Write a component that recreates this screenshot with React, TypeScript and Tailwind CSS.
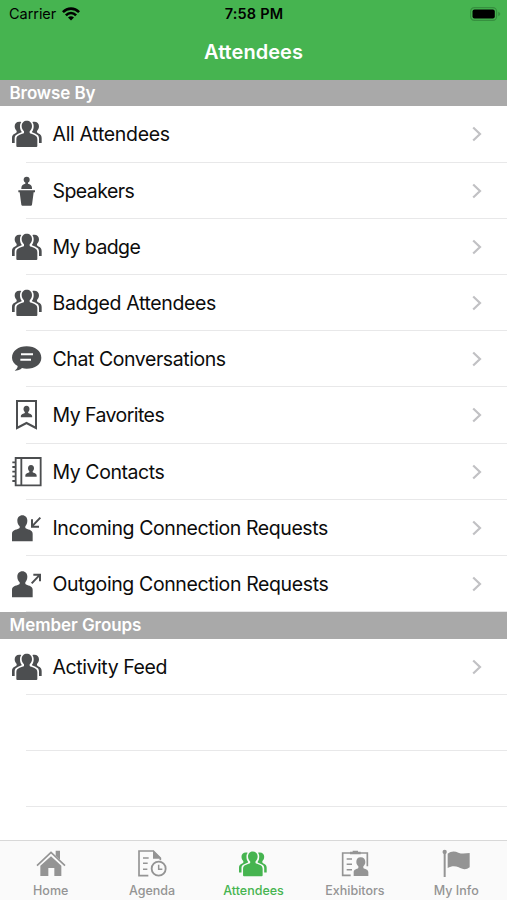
import type { ReactNode } from 'react';

const FONT = "font-['Inter','Liberation_Sans',sans-serif]";

function Svg({ children, className = 'h-[30px] w-[30px]' }: { children: ReactNode; className?: string }) {
  return (
    <svg viewBox="0 0 90 90" className={className} fill="currentColor" aria-hidden="true">
      {children}
    </svg>
  );
}

const SIDE = 'M28 9C16 6 8 12 8 22C8 29 11 33 14 36V40C11 45 0 44 0 57V72H8V58C8 46 20 45 29 40V38C25 33 24 28 24 21C24 15 26 12 28 9Z';

function PeopleShapes() {
  return (
    <>
      <path d={SIDE} />
      <path d={SIDE} transform="translate(89 0) scale(-1 1)" />
      <path d="M44.5 5C53 5 60 11 60 21C60 28 57 33 53 37V42C57 46 76 46 76 60V81Q76 84 73 84H16Q13 84 13 81V60C13 46 32 46 36 42V37C32 33 29 28 29 21C29 11 36 5 44.5 5Z" />
    </>
  );
}

function People({ className }: { className?: string }) {
  return (
    <Svg className={className}>
      <PeopleShapes />
    </Svg>
  );
}

function Speaker() {
  return (
    <Svg>
      <circle cx="44" cy="11" r="9" />
      <path d="M40 18H48V23C54 24 60 27 60 36V39H28V36C28 27 34 24 40 23Z" />
      <path d="M19 43H69V49H65L60 86Q59 89 57 89H31Q29 89 28 86L23 49H19Z" />
    </Svg>
  );
}

function Chat() {
  return (
    <Svg>
      <path d="M44 7C69 7 88 21 88 41C88 61 69 74 44 74C39 74 34 73 30 72C25 78 17 80 8 80C14 76 17 71 17 66C7 60 0 52 0 41C0 21 19 7 44 7Z" />
      <path d="M27 31H63M25 47H57" fill="none" stroke="white" strokeWidth="6" />
    </Svg>
  );
}

const BUST = 'M0-18C6-18 9-14 9-8C9-4 7-1 5 1V4C8 6 17 7 17 14V17H-17V14C-17 7-8 6-5 4V1C-7-1-9-4-9-8C-9-14-6-18 0-18Z';

function Favorite() {
  return (
    <Svg>
      <path d="M15 3H72V84L43.5 69L15 84Z" fill="none" stroke="currentColor" strokeWidth="6" />
      <path d={BUST} transform="translate(43.5 35)" />
    </Svg>
  );
}

function Contacts() {
  return (
    <Svg>
      <path d="M11 3H86V85H11ZM28 3V85M1 16H11M1 30H11M1 44H11M1 58H11M1 72H11" fill="none" stroke="currentColor" strokeWidth="5.5" />
      <path d={BUST} transform="translate(57 42)" />
    </Svg>
  );
}

function Connection({ outgoing = false }: { outgoing?: boolean }) {
  return (
    <Svg>
      <path d="M31 7C40 7 46 14 46 23C46 30 43 36 40 40V45C45 50 62 49 62 62V85H0V62C0 49 18 50 23 45V40C19 36 16 30 16 23C16 14 22 7 31 7Z" />
      {outgoing ? (
        <path d="M59 43L84 17M64 17H84V37" fill="none" stroke="currentColor" strokeWidth="6" />
      ) : (
        <path d="M85 14L60 40M60 19V41H81" fill="none" stroke="currentColor" strokeWidth="6" />
      )}
    </Svg>
  );
}

function Home() {
  return (
    <Svg>
      <path d="M59 5H72V32L59 20Z" />
      <path d="M45 22L76 50V81H55V57H37V81H13V50Z" />
      <path d="M3 50L45 10L87 50" fill="none" stroke="currentColor" strokeWidth="5" />
    </Svg>
  );
}

function Agenda() {
  return (
    <Svg>
      <path d="M34 80H6V6H49L70 27V34" fill="none" stroke="currentColor" strokeWidth="5" />
      <path d="M48 4V29H73Z" />
      <path d="M18 27H35M18 43H32M18 61H31" stroke="currentColor" strokeWidth="4.5" />
      <circle cx="65" cy="59" r="21" fill="none" stroke="currentColor" strokeWidth="5.5" />
      <path d="M65 47V61H76" fill="none" stroke="currentColor" strokeWidth="4.5" />
    </Svg>
  );
}

function Exhibitors() {
  return (
    <Svg>
      <path d="M32 79H8V12H82V52" fill="none" stroke="currentColor" strokeWidth="5" />
      <path d="M30 8H38V5H54V8H62V16H30Z" />
      <path d="M20 30H36M20 46H36M20 62H36" stroke="currentColor" strokeWidth="4.5" />
      <path d="M62 25C71 25 76 31 76 39C76 45 73 49 70 52V57C74 61 85 60 85 70V81H41V70C41 60 51 61 55 57V52C52 49 49 45 49 39C49 31 53 25 62 25Z" />
    </Svg>
  );
}

function Flag() {
  return (
    <Svg>
      <circle cx="11" cy="9" r="6.5" />
      <path d="M8 9H14V84H8Z" />
      <path d="M20 14C31 5 42 6 52 11C63 16 75 13 86 12V55C75 64 64 61 53 55C42 50 31 51 20 57Z" />
    </Svg>
  );
}

function Wifi() {
  return (
    <svg viewBox="0 0 18 14" className="h-[14px] w-[18px]" fill="none" stroke="black" strokeWidth="2.600" aria-hidden="true">
      <path d="M.9 5.200C5.500.4 12.500.4 17.100 5.200M3.900 8.300C6.800 5.300 11.200 5.300 14.100 8.300" />
      <path d="M9 13.500L6 10.500Q9 7.900 12 10.500Z" fill="black" stroke="none" />
    </svg>
  );
}

function Battery() {
  return (
    <svg viewBox="0 0 31 14" className="h-[14px] w-[31px]" aria-hidden="true">
      <rect x=".6" y=".6" width="26" height="12.800" rx="3.800" fill="none" stroke="#36903f" strokeWidth="1.200" />
      <rect x="2.500" y="2.500" width="22.300" height="9" rx="2" fill="black" />
      <path d="M28.200 4.700Q30.300 5.500 30.300 7T28.200 9.300Z" fill="#36903f" />
    </svg>
  );
}

function Row({ icon, label, tracking = 'tracking-[-0.38px]' }: { icon?: ReactNode; label?: string; tracking?: string }) {
  return (
    <div className="flex h-[56.2px] shrink-0 flex-col">
      <div className="flex flex-1 items-center pl-3 pr-[25px] pt-px text-[#4c4e50]">
        {icon}
        {label && (
          <>
            <span className={`ml-[10.5px] flex-1 whitespace-nowrap text-[19.5px] leading-6 text-[#0c0c0c] ${tracking}`}>{label}</span>
            <svg viewBox="0 0 10 16" className="h-4 w-[10px]" fill="none" stroke="#c1c1c4" strokeWidth="2.200" aria-hidden="true">
              <path d="M1.200 1.500L8 8L1.200 14.500" />
            </svg>
          </>
        )}
      </div>
      <div className="ml-[25.5px] h-px bg-[#e8e8e9]" />
    </div>
  );
}

function SectionHeader({ title, tracking = '' }: { title: string; tracking?: string }) {
  return (
    <h2
      className={`flex h-[26.5px] shrink-0 items-center bg-[#a9a9a9] pl-[9.5px] text-[17px] font-semibold leading-5 text-white ${tracking}`}
    >
      {title}
    </h2>
  );
}

const tabs = [
  { label: 'Home', icon: <Home /> },
  { label: 'Agenda', icon: <Agenda /> },
  { label: 'Attendees', icon: <People className="h-7 w-7" />, active: true },
  { label: 'Exhibitors', icon: <Exhibitors /> },
  { label: 'My Info', icon: <Flag /> },
];

export default function App() {
  return (
    <div className={`flex h-[900px] w-[507px] flex-col overflow-hidden bg-white ${FONT}`}>
      <header className="h-[79.9px] shrink-0 bg-[#46b450]">
        <div className="grid h-[27px] grid-cols-3 items-center pl-[9px] pr-[6px] text-black">
          <div className="flex items-center gap-[6px]">
            <span className="text-[14.5px] tracking-[-0.05px]">Carrier</span>
            <Wifi />
          </div>
          <span className="-ml-[2px] text-center text-[14.5px] font-semibold tracking-[0.2px]">7:58 PM</span>
          <div className="flex justify-end">
            <Battery />
          </div>
        </div>
        <h1 className="flex h-[50px] items-center justify-center text-[20px] font-semibold tracking-[0.04px] text-white">Attendees</h1>
      </header>
      <main className="flex min-h-0 flex-1 flex-col overflow-hidden">
        <SectionHeader title="Browse By" tracking="tracking-[-0.1px]" />
        <Row icon={<People />} label="All Attendees" tracking="tracking-[-0.32px]" />
        <Row icon={<Speaker />} label="Speakers" tracking="tracking-[-0.55px]" />
        <Row icon={<People />} label="My badge" tracking="tracking-[-0.6px]" />
        <Row icon={<People />} label="Badged Attendees" />
        <Row icon={<Chat />} label="Chat Conversations" tracking="tracking-[-0.43px]" />
        <Row icon={<Favorite />} label="My Favorites" tracking="tracking-[-0.56px]" />
        <Row icon={<Contacts />} label="My Contacts" tracking="tracking-[-0.43px]" />
        <Row icon={<Connection />} label="Incoming Connection Requests" tracking="tracking-[-0.41px]" />
        <Row icon={<Connection outgoing />} label="Outgoing Connection Requests" />
        <SectionHeader title="Member Groups" tracking="tracking-[-0.05px]" />
        <Row icon={<People />} label="Activity Feed" tracking="tracking-[-0.42px]" />
        <Row />
        <Row />
      </main>
      <nav className="grid h-[60px] shrink-0 grid-cols-5 border-t border-[#d8d8d8] bg-[#fafafa]">
        {tabs.map((tab) => (
          <div
            key={tab.label}
            className={`flex flex-col items-center pt-2 text-[12.5px] font-medium leading-4 ${tab.active ? 'text-[#46b450]' : 'text-[#949494]'}`}
          >
            <div className="flex h-[30px] items-center">{tab.icon}</div>
            <span className="mt-1 whitespace-nowrap">{tab.label}</span>
          </div>
        ))}
      </nav>
    </div>
  );
}
